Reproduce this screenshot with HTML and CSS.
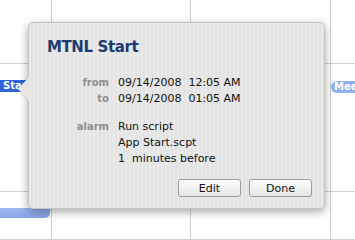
FILE: index.html
```html
<!DOCTYPE html>
<html lang="en">

<head>
    <meta charset="UTF-8">
    <meta name="viewport" content="width=device-width, initial-scale=1.0">
    <title>MTNL Start</title>
    <link rel="stylesheet" href="styles.css">
</head>

<body>
    <!-- calendar behind the popover -->
    <div class="calendar">
        <div class="cell c1"></div>
        <div class="cell c2"></div>
        <div class="cell c3"></div>
        <div class="cell c4"></div>

        <div class="cell c1">
            <div class="event selected">Start</div>
        </div>
        <div class="cell c2"></div>
        <div class="cell c3"></div>
        <div class="cell c4">
            <div class="event light">Meeting</div>
        </div>

        <div class="cell c1">
            <div class="event bar"></div>
        </div>
        <div class="cell c2"></div>
        <div class="cell c3"></div>
        <div class="cell c4"></div>
    </div>

    <!-- event info popover -->
    <div class="popover">
        <h1 class="title">MTNL Start</h1>

        <div class="details">
            <span class="label">from</span>
            <span class="value">09/14/2008&nbsp; 12:05 AM</span>
            <span class="label">to</span>
            <span class="value">09/14/2008&nbsp; 01:05 AM</span>

            <span class="label spaced">alarm</span>
            <span class="value spaced">Run script<br>App Start.scpt<br>1&nbsp; minutes before</span>
        </div>

        <div class="buttons">
            <button class="btn">Edit</button>
            <button class="btn">Done</button>
        </div>
    </div>
</body>

</html>
```

FILE: styles.css
```css
body {
    margin: 0;
    width: 355px;
    height: 240px;
    overflow: hidden;
    position: relative;
    background: #fff;
    font-family: "DejaVu Sans", Verdana, sans-serif;
}

.calendar {
    display: grid;
    grid-template-columns: 52px 139px 140px 1fr;
    grid-template-rows: 64px 128px 1fr;
    height: 240px;
}

.cell {
    border-right: 1px solid #cfcfcf;
    border-bottom: 1px solid #cfcfcf;
    overflow: hidden;
}

.c4 {
    border-right: none;
}

.event {
    height: 12px;
    margin-top: 16px;
    font-size: 10px;
    font-weight: bold;
    line-height: 12px;
    color: #fff;
    white-space: nowrap;
    padding-left: 3px;
}

.event.selected {
    background: #2f63d8;
    width: 30px;
}

.event.light {
    background: #92b0ea;
    border-radius: 6px 0 0 6px;
    margin-top: 17px;
}

.event.bar {
    height: 10px;
    background: linear-gradient(#9db6ee, #88a6e6);
    border-radius: 0 0 5px 0;
    margin-right: 1px;
}

.popover {
    position: absolute;
    left: 28px;
    top: 22px;
    width: 297px;
    height: 187px;
    box-sizing: border-box;
    padding: 14px 12px 0 18px;
    border-radius: 5px;
    border: 1px solid #c4c4c4;
    background-color: #e7e7e7;
    background-image: repeating-linear-gradient(90deg, #e9e9e9 0, #e9e9e9 2px, #e3e3e3 2px, #e3e3e3 4px);
    box-shadow: 0 3px 10px rgba(0, 0, 0, 0.35);
    display: flex;
    flex-direction: column;
}

.popover::before {
    content: "";
    position: absolute;
    left: -11px;
    top: 54px;
    border-top: 12px solid transparent;
    border-bottom: 12px solid transparent;
    border-right: 11px solid #e6e6e6;
    filter: drop-shadow(-1px 0 1px rgba(0, 0, 0, 0.15));
}

.title {
    margin: 0;
    font-size: 15px;
    letter-spacing: -0.4px;
    line-height: 20px;
    color: #1d3b70;
}

.details {
    display: grid;
    grid-template-columns: 62px 1fr;
    column-gap: 9px;
    margin-top: 18px;
    font-size: 11px;
    line-height: 16px;
    color: #111;
}

.label {
    text-align: right;
    font-size: 10px;
    font-weight: bold;
    color: #8e8e8e;
}

.spaced {
    margin-top: 12px;
}

.buttons {
    margin-top: auto;
    margin-bottom: 11px;
    display: flex;
    justify-content: flex-end;
    gap: 8px;
}

.btn {
    width: 63px;
    height: 18px;
    padding: 0;
    border: 1px solid #9c9c9c;
    border-radius: 3px;
    background: linear-gradient(#ffffff, #f1f1f1 50%, #e6e6e6);
    font-family: "DejaVu Sans", Verdana, sans-serif;
    font-size: 11px;
    color: #111;
}
```
